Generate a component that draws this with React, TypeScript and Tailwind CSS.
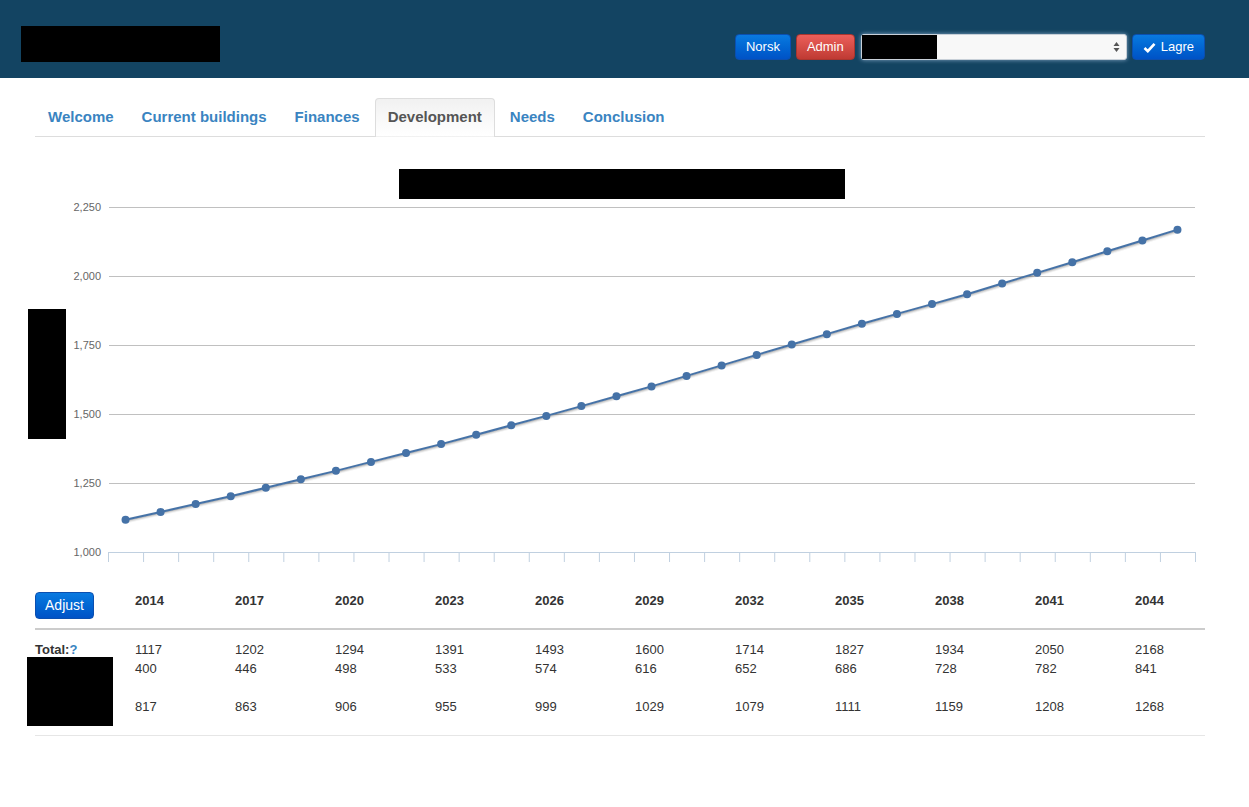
import React from "react";

const font = { fontFamily: "'Liberation Sans', Arial, sans-serif" };

const tabs = ["Welcome", "Current buildings", "Finances", "Development", "Needs", "Conclusion"];

const years = [2014, 2017, 2020, 2023, 2026, 2029, 2032, 2035, 2038, 2041, 2044];
const totals = [1117, 1202, 1294, 1391, 1493, 1600, 1714, 1827, 1934, 2050, 2168];
const rowTwo = [400, 446, 498, 533, 574, 616, 652, 686, 728, 782, 841];
const rowThree = [817, 863, 906, 955, 999, 1029, 1079, 1111, 1159, 1208, 1268];

// every year 2014..2044, filled in between the known 3-year steps
const series = Array.from({ length: 31 }, (_, i) => {
  const k = Math.floor(i / 3);
  const r = i % 3;
  if (r === 0) return totals[k];
  return totals[k] + ((totals[k + 1] - totals[k]) * r) / 3;
});

const plotLeft = 73;
const plotRight = 1160;
const catW = (plotRight - plotLeft) / 31;
const yOf = (v: number) => 415 - (v - 1000) * 0.276;
const xOf = (i: number) => plotLeft + catW * (i + 0.5);

function Chart() {
  const grid = [1000, 1250, 1500, 1750, 2000, 2250];
  const pts = series.map((v, i) => `${xOf(i).toFixed(1)},${yOf(v).toFixed(1)}`);
  const d = "M" + pts.join(" L");

  return (
    <svg width={1170} height={449} className="block overflow-visible" style={font}>
      {/* title + axis title (redacted) */}
      <rect x={364} y={32} width={446} height={30} fill="#000" />
      <rect x={-7} y={172} width={38} height={130} fill="#000" />

      {grid.map((g) => (
        <g key={g}>
          {g !== 1000 && (
            <line x1={plotLeft + 1} x2={plotRight} y1={yOf(g) + 0.5} y2={yOf(g) + 0.5} stroke="#c0c0c0" />
          )}
          <text x={66} y={yOf(g) + 4} textAnchor="end" fontSize={11} fill="#666">
            {g.toLocaleString("en-US")}
          </text>
        </g>
      ))}

      {/* x axis */}
      <line x1={plotLeft} x2={plotRight} y1={415.5} y2={415.5} stroke="#c0d0e0" />
      {Array.from({ length: 32 }, (_, k) => (
        <line
          key={k}
          x1={plotLeft + catW * k + 0.5}
          x2={plotLeft + catW * k + 0.5}
          y1={415}
          y2={425}
          stroke="#c0d0e0"
        />
      ))}

      {/* series with soft shadow */}
      <g transform="translate(1,1)" fill="none" strokeLinejoin="round" strokeLinecap="round">
        <path d={d} stroke="#000" strokeOpacity={0.05} strokeWidth={5} />
        <path d={d} stroke="#000" strokeOpacity={0.1} strokeWidth={3} />
        <path d={d} stroke="#000" strokeOpacity={0.15} strokeWidth={1} />
      </g>
      <path d={d} fill="none" stroke="#4572a7" strokeWidth={2} strokeLinejoin="round" />
      {series.map((v, i) => (
        <circle key={i} cx={xOf(i)} cy={yOf(v)} r={4} fill="#4572a7" />
      ))}
    </svg>
  );
}

export default function App() {
  return (
    <div className="min-h-[807px] bg-white text-[#333]" style={font}>
      {/* Top bar */}
      <div className="flex h-[78px] items-start justify-between bg-[#134462] pl-[21px] pr-[44px]">
        <div className="mt-[26px] h-[36px] w-[199px] bg-black" />
        <div className="mt-[34px] flex items-center">
          <button className="h-[26px] rounded-[4px] border border-[#0b4fb0] bg-gradient-to-b from-[#0a7ae0] to-[#0052c6] px-[10px] text-[13px] text-white">
            Norsk
          </button>
          <button className="ml-[5px] h-[26px] rounded-[4px] border border-[#a9352f] bg-gradient-to-b from-[#ec5f5a] to-[#bf3a33] px-[10px] text-[13px] text-white">
            Admin
          </button>
          <div className="ml-[6px] flex h-[26px] w-[266px] items-center justify-between rounded-[3px] border border-[#c8d0d8] bg-[#f8f8f8] pr-[6px] shadow-[0_0_4px_rgba(160,190,220,0.8)]">
            <div className="h-[24px] w-[75px] bg-black" />
            <svg width="7" height="12" viewBox="0 0 7 12">
              <path d="M3.5 1 L6.5 5 L0.5 5 Z" fill="#555" />
              <path d="M3.5 11 L6.5 7 L0.5 7 Z" fill="#555" />
            </svg>
          </div>
          <button className="ml-[5px] flex h-[26px] items-center gap-[5px] rounded-[4px] border border-[#0b4fb0] bg-gradient-to-b from-[#0a7ae0] to-[#0052c6] px-[10px] text-[13px] text-white">
            <svg width="13" height="11" viewBox="0 0 13 11">
              <path d="M1.5 6 L4.8 9.2 L11.5 1.8" fill="none" stroke="#fff" strokeWidth="2.6" />
            </svg>
            Lagre
          </button>
        </div>
      </div>

      <div className="mx-[35px] w-[1170px]">
        {/* Tabs */}
        <div className="mt-5 flex border-b border-[#ddd]">
          {tabs.map((t) =>
            t === "Development" ? (
              <div
                key={t}
                className="-mb-px mr-[2px] rounded-t-[4px] border border-[#ddd] border-b-transparent bg-gradient-to-b from-[#f1f1f1] to-white px-[12px] py-[8px] text-[15px] font-bold leading-5 text-[#555]"
              >
                {t}
              </div>
            ) : (
              <div key={t} className="mr-[2px] border border-transparent px-[12px] py-[8px] text-[15px] font-bold leading-5 text-[#3a84c1]">
                {t}
              </div>
            )
          )}
        </div>

        <Chart />

        {/* Table */}
        <div className="grid h-[44px] grid-cols-[100px_repeat(10,100px)_70px] items-start border-b-2 border-[#ccc] pt-[5px]">
          <div>
            <button className="mt-[1px] h-[27px] w-[59px] rounded-[4px] border border-[#0b4fb0] bg-gradient-to-b from-[#0a7ae0] to-[#0052c6] text-[14px] text-white">
              Adjust
            </button>
          </div>
          {years.map((y) => (
            <div key={y} className="text-[13px] font-bold leading-5 text-[#333]">
              {y}
            </div>
          ))}
        </div>

        <div className="relative border-b border-[#e6e6e6] pb-[19px] pt-[10px] text-[13px] leading-[19px]">
          <div className="grid grid-cols-[100px_repeat(10,100px)_70px]">
            <div className="font-bold">
              Total:<span className="text-[#3a84c1]">?</span>
            </div>
            {totals.map((v, i) => (
              <div key={i}>{v}</div>
            ))}
          </div>
          <div className="grid grid-cols-[100px_repeat(10,100px)_70px]">
            <div />
            {rowTwo.map((v, i) => (
              <div key={i}>{v}</div>
            ))}
          </div>
          <div className="mt-[19px] grid grid-cols-[100px_repeat(10,100px)_70px]">
            <div />
            {rowThree.map((v, i) => (
              <div key={i}>{v}</div>
            ))}
          </div>
          <div className="absolute left-[-8px] top-[27px] h-[69px] w-[86px] bg-black" />
        </div>
      </div>
    </div>
  );
}
